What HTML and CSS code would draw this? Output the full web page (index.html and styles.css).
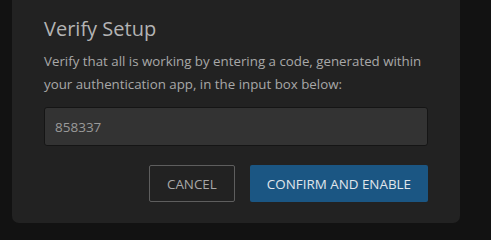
FILE: index.html
```html
<!DOCTYPE html>
<html lang="en">
<head>
  <meta charset="UTF-8">
  <title>Verify Setup</title>
  <link rel="stylesheet" href="styles.css">
</head>
<body>
  <div class="dialog">
    <h2 class="dialog-title">Verify Setup</h2>
    <p class="dialog-text">Verify that all is working by entering a code, generated within your authentication app, in the input box below:</p>
    <input class="code-input" type="text" value="858337">
    <div class="actions">
      <button class="btn btn-cancel">CANCEL</button>
      <button class="btn btn-confirm">CONFIRM AND ENABLE</button>
    </div>
  </div>
</body>
</html>
```

FILE: styles.css
```css
body {
  margin: 0;
  padding: 0 31px 0 12px;
  background: #121212;
  font-family: 'Open Sans', sans-serif;
}

.dialog {
  margin-top: -10px;
  padding: 22px 32px 21px;
  background: #222222;
  border-radius: 7px;
}

.dialog-title {
  margin: 0;
  font-size: 20px;
  font-weight: normal;
  line-height: 34px;
  color: #b4b4b4;
}

.dialog-text {
  margin: 4px 0 11px;
  font-size: 13.3px;
  line-height: 23px;
  color: #a8a8a8;
}

.code-input {
  display: block;
  box-sizing: border-box;
  width: 100%;
  height: 39px;
  padding: 0 10px;
  background: #333333;
  border: 1px solid #151515;
  border-radius: 3px;
  font-family: inherit;
  font-size: 13.5px;
  color: #9a9a9a;
}

.actions {
  display: flex;
  justify-content: flex-end;
  gap: 15px;
  margin-top: 19px;
}

.btn {
  height: 37px;
  padding: 0 17px;
  font-family: inherit;
  font-size: 13.4px;
  border-radius: 2px;
  cursor: pointer;
}

.btn-cancel {
  background: transparent;
  border: 1px solid #5e5e5e;
  color: #a8a8a8;
}

.btn-confirm {
  background: #1b5683;
  border: none;
  color: #e0e6ec;
}
```
